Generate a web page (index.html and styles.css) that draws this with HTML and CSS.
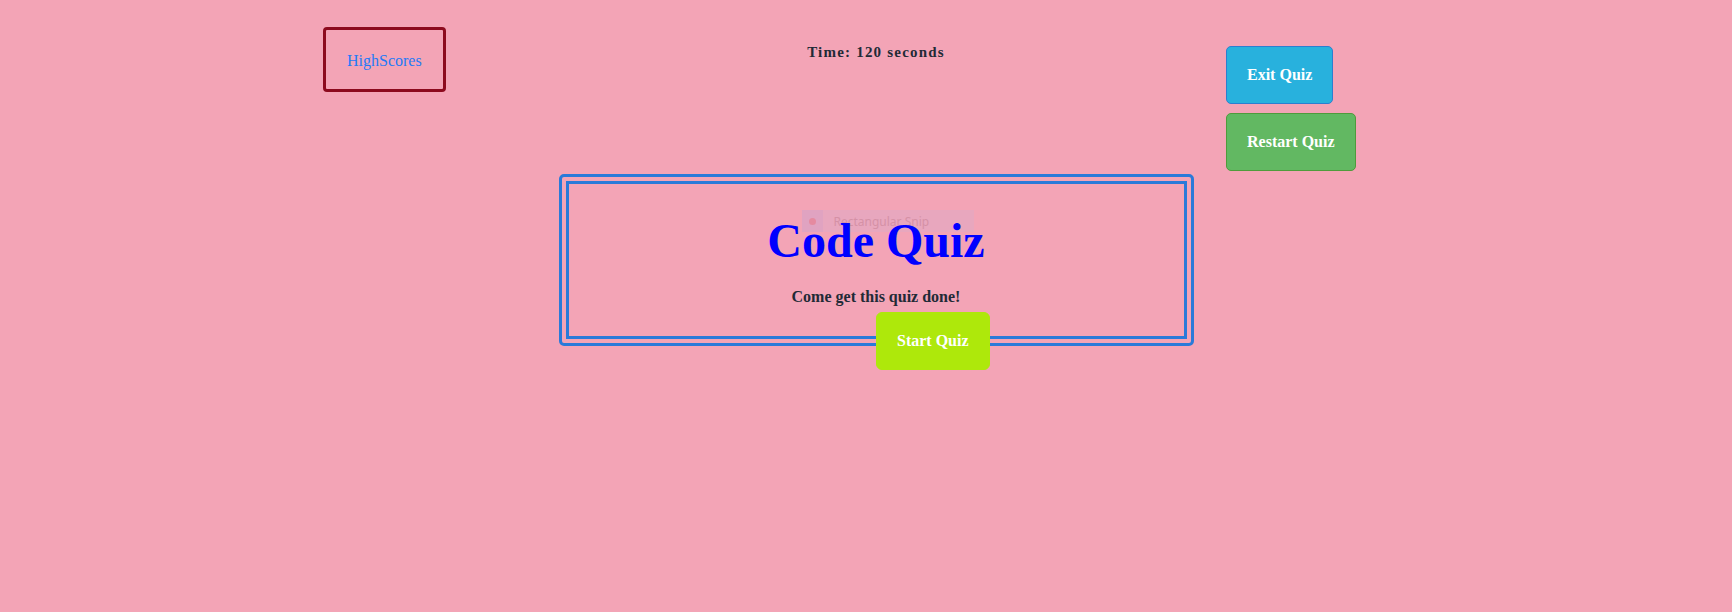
FILE: index.html
```html
<!DOCTYPE html>
<html lang="en">
<head>
<meta charset="utf-8">
<title>Code Quiz</title>
<link rel="stylesheet" href="styles.css">
</head>
<body>
<div class="page">
  <header class="top">
    <div class="top-left">
      <a class="highscores" href="#">HighScores</a>
    </div>
    <div class="top-center">
      <p class="timer">Time: 120 seconds</p>
    </div>
    <div class="top-right">
      <button class="btn btn-exit">Exit Quiz</button>
      <button class="btn btn-restart">Restart Quiz</button>
    </div>
  </header>
  <main class="quiz-box">
    <div class="snip"><span class="snip-icon"><span class="snip-dot"></span></span><span class="snip-label">Rectangular Snip</span></div>
    <h1 class="title">Code Quiz</h1>
    <p class="lead">Come get this quiz done!</p>
    <button class="btn btn-start">Start Quiz</button>
  </main>
</div>
</body>
</html>
```
FILE: styles.css
```css
html, body {
  margin: 0;
  padding: 0;
}
body {
  background: #f3a4b6;
  font-family: "Liberation Serif", "Times New Roman", serif;
  color: #212529;
  min-height: 612px;
}
.page {
  width: 1106px;
  margin: 0 auto;
  padding-left: 20px;
}
.top {
  display: grid;
  grid-template-columns: 1fr 200px 1fr;
}
.top-left {
  padding-top: 27px;
}
.highscores {
  display: inline-block;
  border: 3px solid #8c0a1e;
  border-radius: 4px;
  padding: 21px 21px 19px;
  font-size: 16px;
  line-height: 19px;
  color: #1f7af6;
  text-decoration: none;
}
.top-center {
  text-align: center;
}
.timer {
  margin: 43px 0 0;
  font-size: 15px;
  line-height: 18px;
  font-weight: bold;
  letter-spacing: 1.2px;
  color: #222a36;
}
.top-right {
  padding-top: 46px;
  padding-left: 250px;
  display: flex;
  flex-direction: column;
  align-items: flex-start;
  gap: 9px;
}
.btn {
  font-family: "Liberation Serif", "Times New Roman", serif;
  font-size: 16px;
  line-height: 18px;
  font-weight: bold;
  color: #ffffff;
  border-radius: 5px;
  padding: 19px 20px;
  cursor: pointer;
}
.btn-exit {
  background: #28b1dd;
  border: 1px solid #2c7ed0;
}
.btn-restart {
  background: #62b862;
  border: 1px solid #4f9b3c;
}
.quiz-box {
  position: relative;
  box-sizing: border-box;
  width: 635px;
  height: 172px;
  margin: 3px auto 0;
  border: 10px double #2a7ad9;
  border-radius: 5px;
  padding-top: 29px;
  text-align: center;
}
.title {
  position: relative;
  margin: 0;
  font-size: 48px;
  line-height: 55px;
  font-weight: bold;
  color: #0000ff;
}
.lead {
  margin: 20px 0 0;
  font-size: 16px;
  line-height: 18px;
  font-weight: bold;
  color: #222a36;
}
.btn-start {
  display: block;
  margin: 6px 0 0 50%;
  background: #aee80b;
  border: 1px solid #aee80b;
  border-radius: 6px;
  padding: 19px 20px;
}
.snip {
  position: absolute;
  left: 233px;
  top: 26px;
  width: 172px;
  height: 22px;
  display: flex;
  align-items: center;
  background: rgba(220, 170, 200, 0.45);
  font-family: "Noto Sans", "Open Sans", sans-serif;
  font-size: 12px;
  color: #d591a6;
}
.snip-icon {
  width: 21px;
  height: 22px;
  display: flex;
  align-items: center;
  justify-content: center;
  background: rgba(215, 160, 195, 0.5);
}
.snip-dot {
  width: 7px;
  height: 7px;
  border-radius: 50%;
  background: #e58aa0;
}
.snip-label {
  margin-left: 11px;
}
```
